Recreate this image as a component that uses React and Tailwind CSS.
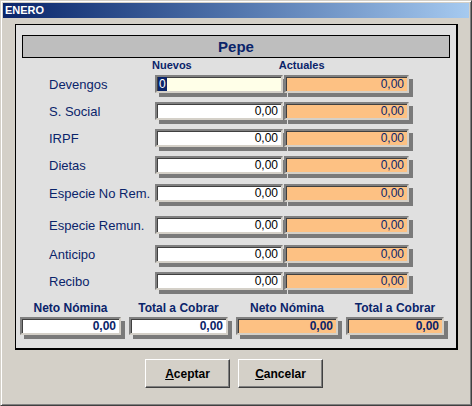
import React from "react";

const rows = [
  { label: "Devengos", mt: "mt-0", first: true },
  { label: "S. Social", mt: "mt-[9px]" },
  { label: "IRPF", mt: "mt-[9px]" },
  { label: "Dietas", mt: "mt-[9px]" },
  { label: "Especie No Rem.", mt: "mt-[10px]" },
  { label: "Especie Remun.", mt: "mt-[14px]" },
  { label: "Anticipo", mt: "mt-[11px]" },
  { label: "Recibo", mt: "mt-[9px]" },
];

const sunken =
  "border-2 border-t-[#808080] border-l-[#808080] border-b-[#d4d0c8] border-r-[#d4d0c8]";

const Field = ({ bg, className = "", children }) => (
  <div
    className={`${sunken} ${bg} ${className} flex items-center justify-end pr-[3px] shadow-[inset_1px_1px_0_#404040,4px_4px_0_#7a7a7a]`}
  >
    {children}
  </div>
);

const Total = ({ label, bg }) => (
  <div className="flex flex-col items-center">
    <div className="text-[12px] font-bold text-[#0a246a] leading-[14px] mb-[2px]">
      {label}
    </div>
    <Field bg={bg} className="w-full h-[18px]">
      <span className="text-[12px] font-bold text-[#0a246a] leading-none">0,00</span>
    </Field>
  </div>
);

const Button = ({ first, rest }) => (
  <button className="w-[85px] h-[29px] bg-[#d4d0c8] border border-t-white border-l-white border-b-[#404040] border-r-[#404040] shadow-[inset_-1px_-1px_0_#808080] text-[12px] font-bold text-black">
    <span className="underline">{first}</span>
    {rest}
  </button>
);

export default function App() {
  return (
    <div className="w-[472px] h-[406px] bg-[#d4d0c8] border border-t-[#d4d0c8] border-l-[#d4d0c8] border-b-[#404040] border-r-[#404040] shadow-[inset_1px_1px_0_#fff,inset_-1px_-1px_0_#808080] p-[2px] flex flex-col font-['Liberation_Sans',Arial,sans-serif] select-none">
      <div className="h-[15px] bg-gradient-to-r from-[#0a246a] to-[#a6caf0] flex items-center pl-[2px]">
        <span className="text-white text-[11px] font-bold leading-none">ENERO</span>
      </div>

      <div className="mt-[6px] ml-[12px] w-[443px] h-[326px] bg-[#e0e0e0] border border-black border-r-2 border-b-2 px-[6px] pt-[10px]">
        <div className="h-[23px] bg-[#bebebe] border border-black flex items-center justify-center">
          <span className="text-[15px] font-bold text-[#0a246a] leading-none">Pepe</span>
        </div>

        <div className="flex mt-[1px] h-[13px] items-center text-[11px] font-bold text-[#0a246a]">
          <span className="ml-[130px]">Nuevos</span>
          <span className="ml-[87px]">Actuales</span>
        </div>

        <div className="flex flex-col mt-[3px]">
          {rows.map((r) => (
            <div key={r.label} className={`flex items-center ${r.mt}`}>
              <span className="w-[133px] pl-[27px] text-[13px] text-[#0a246a] leading-none">
                {r.label}
              </span>
              {r.first ? (
                <div
                  className={`${sunken} bg-[#ffffe8] w-[128px] h-[18px] flex items-center pl-[1px] shadow-[inset_1px_1px_0_#404040,4px_4px_0_#7a7a7a]`}
                >
                  <span className="bg-[#0a246a] text-white text-[12px] leading-[14px] px-[1px]">0</span>
                </div>
              ) : (
                <Field bg="bg-white" className="w-[128px] h-[18px]">
                  <span className="text-[12px] text-black leading-none">0,00</span>
                </Field>
              )}
              <Field bg="bg-[#fdc183]" className="w-[125px] h-[18px] ml-px">
                <span className="text-[12px] text-[#0a246a] leading-none">0,00</span>
              </Field>
            </div>
          ))}
        </div>

        <div className="grid grid-cols-[101px_99px_102px_98px] gap-x-[8px] mt-[11px] -ml-[2px]">
          <Total label="Neto Nómina" bg="bg-white" />
          <Total label="Total a Cobrar" bg="bg-white" />
          <Total label="Neto Nómina" bg="bg-[#fdc183]" />
          <Total label="Total a Cobrar" bg="bg-[#fdc183]" />
        </div>
      </div>

      <div className="flex justify-center gap-[8px] mt-[9px] pr-[4px]">
        <Button first="A" rest="ceptar" />
        <Button first="C" rest="ancelar" />
      </div>
    </div>
  );
}
